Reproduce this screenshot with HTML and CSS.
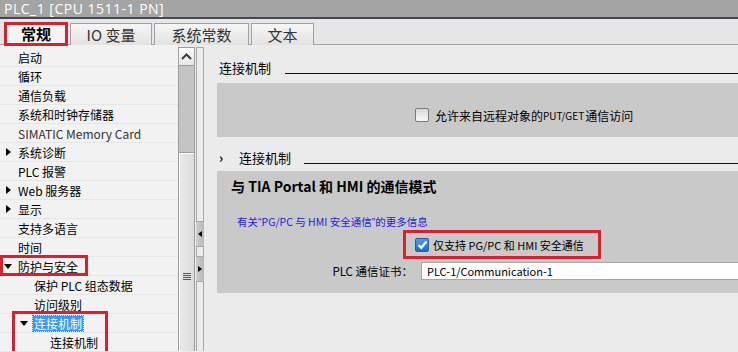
FILE: index.html
```html
<!DOCTYPE html>
<html lang="zh">
<head>
  <meta charset="UTF-8">
  <title>PLC_1 属性</title>
  <link rel="stylesheet" href="styles.css">
</head>
<body>
  <div class="titlebar">PLC_1 [CPU 1511-1 PN]</div>

  <div class="tabbar">
    <div class="tab tab-general active">常规<span class="mark"></span></div>
    <div class="tab tab-io">IO 变量</div>
    <div class="tab tab-const">系统常数</div>
    <div class="tab tab-text">文本</div>
  </div>

  <div class="main">
    <ul class="tree">
      <li class="l1">启动</li>
      <li class="l1">循环</li>
      <li class="l1">通信负载</li>
      <li class="l1">系统和时钟存储器</li>
      <li class="l1 latin">SIMATIC Memory Card</li>
      <li class="l1 closed">系统诊断</li>
      <li class="l1">PLC 报警</li>
      <li class="l1 closed">Web 服务器</li>
      <li class="l1 closed">显示</li>
      <li class="l1">支持多语言</li>
      <li class="l1">时间</li>
      <li class="l1 open">防护与安全<span class="mark mark-security"></span></li>
      <li class="l2">保护 PLC 组态数据</li>
      <li class="l2">访问级别</li>
      <li class="l2 open"><span class="selected">连接机制</span><span class="mark mark-conn"></span></li>
      <li class="l3">连接机制</li>
    </ul>

    <div class="vscroll">
      <div class="sb-up"><svg width="11" height="7" viewBox="0 0 11 7"><path d="M1 6 L5.5 1.5 L10 6" fill="none" stroke="#3c3c3c" stroke-width="2"/></svg></div>
      <div class="sb-track"></div>
      <div class="sb-thumb"><span class="grip"></span></div>
    </div>

    <div class="splitter">
      <div class="sp-btn sp-left"></div>
      <div class="sp-btn sp-right"></div>
    </div>

    <div class="content">
      <div class="head head-first">
        <span class="head-label">连接机制</span>
        <span class="rule"></span>
      </div>
      <div class="box box-putget">
        <label class="check"><span class="cb"></span>允许来自远程对象的 <span class="small">PUT/GET</span>通信访问</label>
      </div>

      <div class="head head-second">
        <span class="chev">›</span>
        <span class="head-label">连接机制</span>
        <span class="rule"></span>
      </div>
      <div class="box box-mode">
        <div class="mode-title">与 TIA Portal 和 HMI 的通信模式</div>
        <div class="mode-link">有关<span class="q">“</span>PG/PC 与 HMI 安全通信<span class="q">”</span>的更多信息</div>
        <div class="mode-check">
          <label class="check"><span class="cb checked"><svg width="11" height="10" viewBox="0 0 11 10"><path d="M1.5 5 L4.3 7.8 L9.5 1.5" fill="none" stroke="#fff" stroke-width="2.2"/></svg></span>仅支持 PG/PC 和 HMI 安全通信</label>
          <span class="mark mark-check"></span>
        </div>
        <div class="cert-row">
          <span class="cert-label">PLC 通信证书：</span>
          <span class="cert-input">PLC-1/Communication-1</span>
        </div>
      </div>
    </div>
  </div>
</body>
</html>
```

FILE: styles.css
```css
body {
  margin: 0;
  width: 738px;
  height: 352px;
  overflow: hidden;
  font-family: "Noto Sans CJK SC", sans-serif;
  font-size: 12px;
  color: #000;
  background: #ebebeb;
}

/* red highlight frames drawn over the UI */
.mark {
  position: absolute;
  border: 3px solid #d8212b;
  box-sizing: border-box;
  pointer-events: none;
}

.titlebar {
  height: 17px;
  line-height: 17px;
  padding-left: 4px;
  font-family: "Open Sans", sans-serif;
  font-size: 14px;
  letter-spacing: 0.5px;
  color: #fff;
  background: #a4a4a4;
  border-bottom: 2px solid #404858;
}

.tabbar {
  height: 26px;
  display: flex;
  align-items: flex-end;
  padding-left: 4px;
  background: #e6e6e6;
  border-bottom: 1px solid #a3a3a3;
  box-sizing: border-box;
}

.tab {
  position: relative;
  height: 22px;
  line-height: 21px;
  margin-right: 2px;
  margin-bottom: -1px;
  font-size: 15px;
  color: #333;
  text-align: center;
  box-sizing: border-box;
  border: 1px solid #a0a0a0;
  border-bottom: none;
  background: linear-gradient(#f6f6f6, #e2e2e2);
}

.tab-general { width: 64px; }
.tab-io { width: 82px; }
.tab-const { width: 95px; }
.tab-text { width: 63px; }

.tab.active {
  background: #f3f3f3;
  font-weight: bold;
  color: #000;
  height: 23px;
}

.tab .mark {
  left: -1px;
  top: -1px;
  right: -1px;
  bottom: -1px;
}

.main {
  display: flex;
  height: 306px;
}

.tree {
  list-style: none;
  margin: 0;
  padding: 3px 0 0;
  width: 178px;
  background: #f2f2f2;
}

.tree li {
  position: relative;
  height: 19px;
  line-height: 19px;
  box-sizing: border-box;
  border-bottom: 1px solid #e6e6e6;
  white-space: nowrap;
}

.tree .l1 { padding-left: 18px; }
.tree .l2 { padding-left: 34px; }
.tree .l3 { padding-left: 50px; }

.tree .latin { color: #333; }

.tree .closed::before {
  content: "";
  position: absolute;
  left: 6px;
  top: 5px;
  border-left: 5px solid #000;
  border-top: 4px solid transparent;
  border-bottom: 4px solid transparent;
}

.tree .open::before {
  content: "";
  position: absolute;
  top: 7px;
  border-top: 5px solid #000;
  border-left: 4px solid transparent;
  border-right: 4px solid transparent;
}

.tree .l1.open::before { left: 4px; }
.tree .l2.open::before { left: 20px; }

.tree .selected {
  display: inline-block;
  margin-left: -1px;
  padding: 0 1px;
  line-height: 15px;
  color: #fff;
  background: #3399ff;
  outline: 1px dotted #7a6f4a;
}

.mark-security {
  left: 0;
  top: -2px;
  width: 88px;
  height: 21px;
}

.mark-conn {
  left: 12px;
  top: -3px;
  width: 96px;
  height: 45px;
}

.vscroll {
  width: 17px;
  margin-top: 2px;
  box-sizing: border-box;
  border: 1px solid #9c9c9c;
  border-bottom: none;
  display: flex;
  flex-direction: column;
  background: #e9e9e9;
}

.sb-up {
  height: 17px;
  display: flex;
  align-items: center;
  justify-content: center;
  background: linear-gradient(#fdfdfd, #e6e6e6);
  border-bottom: 1px solid #9c9c9c;
}

.sb-track {
  height: 86px;
  background: #c4c4c4;
}

.sb-thumb {
  flex: 1;
  position: relative;
  border-top: 1px solid #9c9c9c;
  box-shadow: inset 1px 1px 0 #fff;
  background: linear-gradient(90deg, #e9e9e9, #dcdcdc);
}

.grip {
  position: absolute;
  left: 4px;
  top: 120px;
  width: 8px;
  height: 7px;
  background: repeating-linear-gradient(#555 0 1px, transparent 1px 2px);
}

.splitter {
  width: 8px;
  margin: 2px 1px 0 1px;
  box-sizing: border-box;
  border: 1px solid #a8a8a8;
  border-bottom: none;
  background: #ececec;
  display: flex;
  flex-direction: column;
}

.sp-btn {
  position: relative;
  height: 24px;
  margin-left: -1px;
  margin-right: -1px;
  border-top: 1px solid #a8a8a8;
  border-bottom: 1px solid #a8a8a8;
  background: linear-gradient(90deg, #cfcfcf, #b7b7b7);
}

.sp-left { margin-top: 173px; }
.sp-right { margin-top: 9px; }

.sp-btn::after {
  content: "";
  position: absolute;
  top: 9px;
  border-top: 3px solid transparent;
  border-bottom: 3px solid transparent;
}

.sp-left::after {
  left: 2px;
  border-right: 4px solid #000;
}

.sp-right::after {
  left: 2px;
  border-left: 4px solid #000;
}

.content {
  flex: 1;
  padding-left: 12px;
  background: #ebebeb;
}

.head {
  display: flex;
  align-items: center;
  height: 16px;
  padding-left: 2px;
  font-size: 13px;
  line-height: 16px;
}

.head-first { margin: 15px 0 7px; }
.head-second { margin: 13px 0 5px; }

.rule {
  flex: 1;
  height: 1px;
  margin-top: 10px;
  background: #111;
}

.head-first .rule { margin-left: 14px; }
.head-second .rule { margin-left: 13px; }

.chev {
  width: 20px;
  font-size: 13px;
  font-weight: bold;
}

.box {
  position: relative;
  background: #c9c9c9;
}

.box-putget {
  height: 54px;
  box-sizing: border-box;
  padding: 24px 0 0 198px;
}

.check {
  display: flex;
  align-items: center;
  height: 16px;
  font-size: 12px;
}

.small {
  font-size: 10px;
  margin-right: 1px;
}

.cb {
  width: 12px;
  height: 12px;
  margin-right: 6px;
  border: 1px solid #7a7a7a;
  border-radius: 2px;
  background: linear-gradient(#d8d8d8, #f8f8f8);
  display: flex;
  align-items: center;
  justify-content: center;
}

.cb.checked {
  margin-right: 4px;
  border-color: #2a5d95;
  background: linear-gradient(#4f9be0, #1f6fc3);
}

.box-mode {
  height: 122px;
  box-sizing: border-box;
  padding-top: 5px;
}

.mode-title {
  padding-left: 14px;
  height: 20px;
  line-height: 20px;
  font-size: 14px;
  font-weight: bold;
}

.mode-link {
  margin-top: 18px;
  padding-left: 20px;
  height: 16px;
  line-height: 16px;
  font-size: 10.5px;
  color: #1c1ce0;
}

.mode-link .q {
  font-family: "Liberation Sans", sans-serif;
}

.mode-check {
  position: relative;
  margin-top: 7px;
  padding-left: 198px;
}

.mode-check .check {
  font-size: 11px;
}

.mark-check {
  left: 186px;
  top: -7px;
  width: 198px;
  height: 29px;
}

.cert-row {
  display: flex;
  align-items: center;
  margin-top: 9px;
}

.cert-label {
  width: 204px;
  text-align: right;
  padding-right: 8px;
  box-sizing: border-box;
  font-size: 11.5px;
}

.cert-input {
  flex: 1;
  height: 18px;
  line-height: 16px;
  padding-left: 5px;
  box-sizing: border-box;
  border: 1px solid #a4a4a4;
  border-right: none;
  background: #fff;
  font-size: 11px;
}
```
